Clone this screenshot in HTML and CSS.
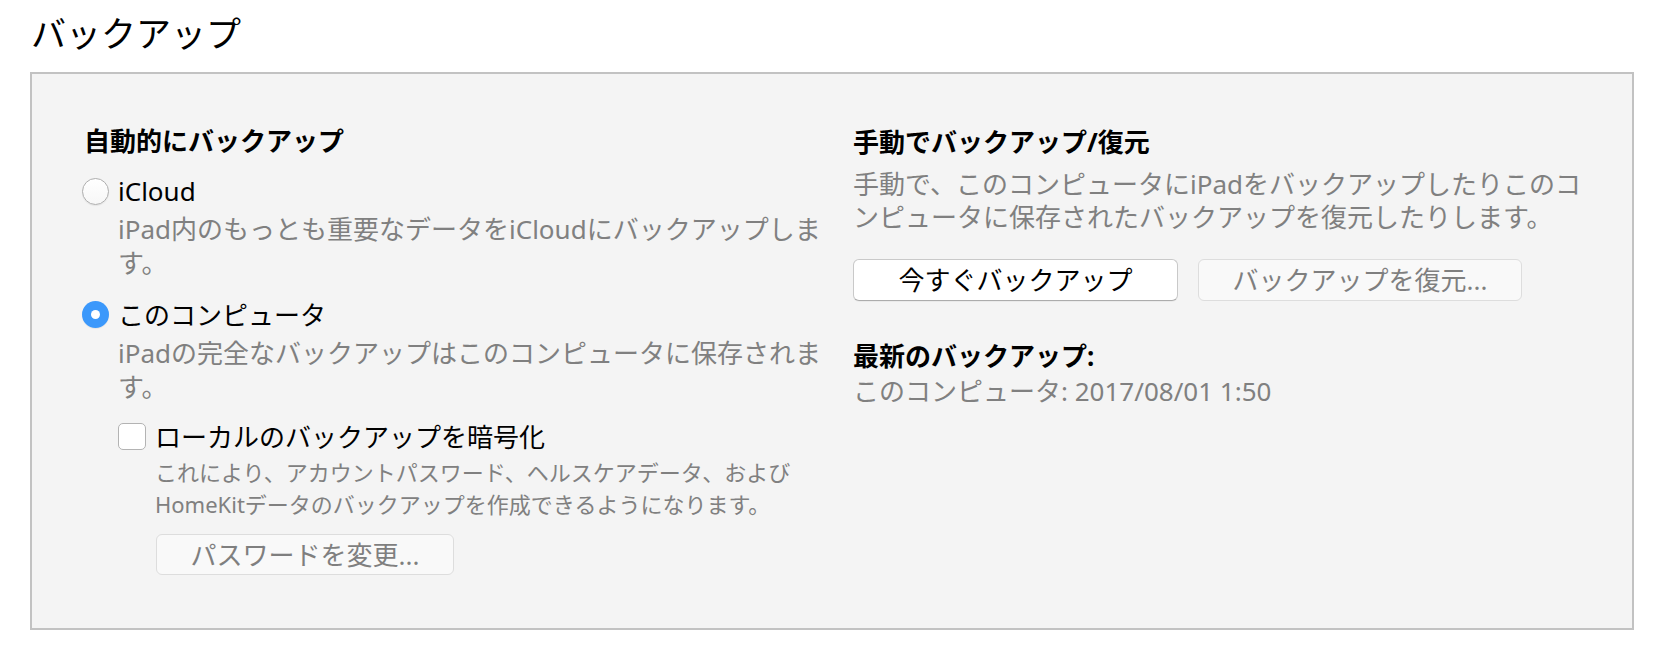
FILE: index.html
```html
<!DOCTYPE html>
<html lang="ja">
<head>
<meta charset="utf-8">
<title>バックアップ</title>
<link rel="stylesheet" href="styles.css">
</head>
<body>
<div class="page">
  <h1 class="title">バックアップ</h1>
  <section class="panel">
    <div class="col col-left">
      <h2 class="heading">自動的にバックアップ</h2>
      <div class="option option-first">
        <span class="radio"></span><span class="label">iCloud</span>
      </div>
      <p class="desc">iPad内のもっとも重要なデータをiCloudにバックアップします。</p>
      <div class="option option-second">
        <span class="radio checked"></span><span class="label">このコンピュータ</span>
      </div>
      <p class="desc">iPadの完全なバックアップはこのコンピュータに保存されます。</p>
      <div class="sub">
        <div class="check-row">
          <span class="checkbox"></span><span class="label">ローカルのバックアップを暗号化</span>
        </div>
        <p class="small-desc">これにより、アカウントパスワード、ヘルスケアデータ、およびHomeKitデータのバックアップを作成できるようになります。</p>
        <button class="btn btn-disabled btn-password" type="button">パスワードを変更...</button>
      </div>
    </div>
    <div class="col col-right">
      <h2 class="heading heading-right">手動でバックアップ/復元</h2>
      <p class="desc desc-right">手動で、このコンピュータにiPadをバックアップしたりこのコンピュータに保存されたバックアップを復元したりします。</p>
      <div class="btn-row">
        <button class="btn btn-primary" type="button">今すぐバックアップ</button>
        <button class="btn btn-disabled" type="button">バックアップを復元...</button>
      </div>
      <h2 class="heading heading-latest">最新のバックアップ:</h2>
      <p class="latest">このコンピュータ: 2017/08/01 1:50</p>
    </div>
  </section>
</div>
</body>
</html>
```

FILE: styles.css
```css
html, body {
  margin: 0;
  padding: 0;
  background: #ffffff;
}

body {
  font-family: "Noto Sans", "Noto Sans CJK JP", sans-serif;
  color: #000000;
}

.page {
  padding: 12px 26px 0 30px;
}

.title {
  margin: 0 0 20px 1px;
  font-family: "Noto Sans CJK JP", sans-serif;
  font-size: 35px;
  line-height: 40px;
  font-weight: 400;
  color: #000;
}

.panel {
  box-sizing: border-box;
  width: 1604px;
  border: 2px solid #c2c2c2;
  background: #f4f4f4;
  padding: 50px 39px 53px 52px;
  display: grid;
  grid-template-columns: 745px 740px;
  column-gap: 24px;
}

.col {
  display: flex;
  flex-direction: column;
  align-items: flex-start;
}

.heading {
  margin: 0;
  font-size: 26px;
  line-height: 34px;
  font-weight: 700;
  color: #000;
}

.heading-right {
  margin-top: 1px;
}

.option {
  display: flex;
  align-items: center;
  margin-left: -2px;
  gap: 9px;
  font-size: 26px;
  line-height: 34px;
}

.option-first {
  margin-top: 16px;
}

.option-second {
  margin-top: 18px;
}

.radio {
  box-sizing: border-box;
  width: 27px;
  height: 27px;
  border-radius: 50%;
  border: 1px solid #aeaeae;
  background: linear-gradient(#ffffff, #f7f7f7);
  box-shadow: 0 1px 1px rgba(0, 0, 0, 0.06);
  flex: none;
  display: flex;
  align-items: center;
  justify-content: center;
}

.option-second .radio {
  position: relative;
  top: -1px;
}

.radio.checked {
  border: none;
  background: #3b98fb;
}

.radio.checked::after {
  content: "";
  width: 9px;
  height: 9px;
  border-radius: 50%;
  background: #ffffff;
}

.desc {
  margin: 4px 0 0 34px;
  width: 711px;
  font-size: 26px;
  line-height: 34px;
  color: #808080;
}

.sub {
  margin: 16px 0 0 34px;
  display: flex;
  flex-direction: column;
  align-items: flex-start;
}

.check-row {
  display: flex;
  align-items: center;
  gap: 9px;
  font-size: 26px;
  line-height: 34px;
}

.checkbox {
  box-sizing: border-box;
  width: 28px;
  height: 27px;
  border: 1px solid #b3b3b3;
  border-radius: 5px;
  background: #ffffff;
  flex: none;
  position: relative;
  top: -1px;
}

.small-desc {
  margin: 2px 0 0 37px;
  width: 637px;
  font-size: 22px;
  line-height: 32px;
  color: #808080;
}

.btn {
  box-sizing: border-box;
  font-family: "Noto Sans", "Noto Sans CJK JP", sans-serif;
  font-size: 26px;
  line-height: 34px;
  border-radius: 6px;
  padding: 0;
  margin: 0;
  text-align: center;
  cursor: default;
}

.btn-primary {
  width: 325px;
  height: 42px;
  background: #ffffff;
  color: #000000;
  border: 1px solid #c9c9c9;
  border-bottom-color: #acacac;
  box-shadow: 0 1px 0 rgba(0, 0, 0, 0.04);
}

.btn-disabled {
  width: 324px;
  height: 42px;
  background: #f9f9f9;
  color: #7f7f7f;
  border: 1px solid #dddddd;
}

.btn-password {
  width: 298px;
  height: 41px;
  margin: 14px 0 0 38px;
}

.desc-right {
  margin: 9px 0 0 0;
  width: 740px;
  line-height: 33px;
}

.btn-row {
  margin-top: 25px;
  display: flex;
  gap: 20px;
}

.heading-latest {
  margin-top: 39px;
  line-height: 32px;
}

.latest {
  margin: 3px 0 0 0;
  font-size: 26px;
  line-height: 32px;
  color: #808080;
}
```
